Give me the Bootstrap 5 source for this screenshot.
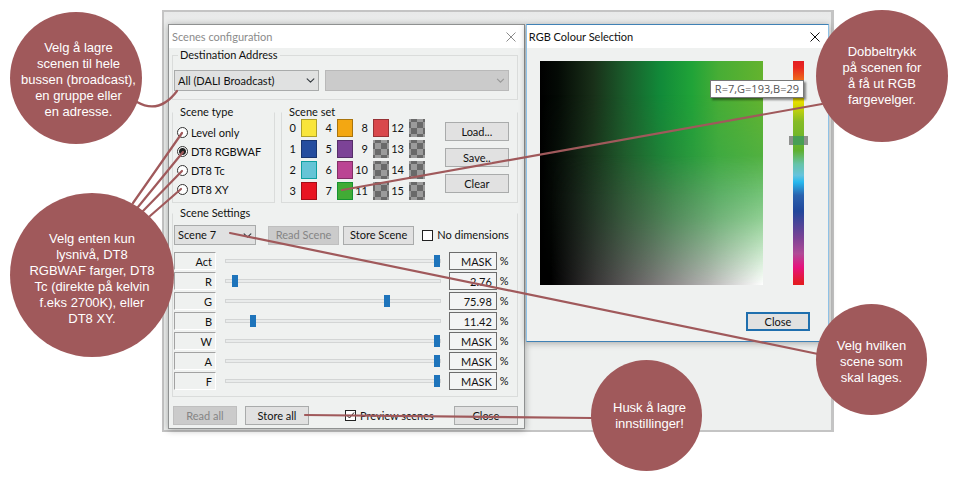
<!DOCTYPE html>
<html lang="no">
<head>
<meta charset="utf-8">
<meta name="viewport" content="width=device-width, initial-scale=1">
<title>Scenes configuration</title>
<link rel="stylesheet" href="https://cdn.jsdelivr.net/npm/bootstrap@5.3.0/dist/css/bootstrap.min.css">
<style>
:root { --rust: #a0595b; --face: #eff1f0; --line: #dadcdb; --btn: #e1e1e1; --blue: #1e74bb; }
body { background: #fff; font-family: Lato, "Open Sans", sans-serif; font-size: 11px; line-height: 14px; color: #111; }
.guide { padding: 10px 121px 45px 162px; }
.desk { border: 2px solid #c4c4c4; border-right-width: 3px; background: linear-gradient(#e8e9e9, #eef0ef 20px); padding: 12px 2px 1px 4px; gap: 1px; }
.win { border: 1px solid #8f9191; background: var(--face); box-shadow: 0 1px 7px rgba(0,0,0,.32); min-width: 0; }
.win-scenes { flex: 357 1 0; }
.win-rgb { flex: 303 1 0; border-color: #3f81b5; border-left-color: #8ec1e6; border-right-color: #8ec1e6; }
.win-title { height: 23px; background: #fff; padding: 0 8px 0 3px; }
.win-rgb .win-title { padding-left: 2px; }
.win-title h1, .win-title h2 { font-size: 11px; line-height: 14px; font-weight: 400; margin: 0; }
.win-scenes .win-title h1 { color: #8b8b8b; }
.win-x { border: 0; background: none; padding: 0; line-height: 0; }
.win-body { padding: 0 6px 3px 3px; }
fieldset.group { border: 1px solid var(--line); padding: 0 8px 0 1px; min-width: 0; }
fieldset.open-top { border-top-color: transparent; }
fieldset.group > legend { float: none; width: auto; margin: 0 0 0 4px; padding: 0 2px; font-size: 11px; line-height: 14px; }
.combo { font-size: 11px; line-height: 14px; height: 21px; padding: 0 16px 0 3px; border: 1px solid #a9abab; border-radius: 0; background-color: #e0e1e1; background-size: 9px 9px; background-position: right 3px center; color: #111; }
.combo:disabled { background-color: #cbcbcb; border-color: #b9b9b9; opacity: 1; background-image: url("data:image/svg+xml,%3Csvg xmlns='http://www.w3.org/2000/svg' viewBox='0 0 16 16'%3E%3Cpath d='m2 5 6 6 6-6' fill='none' stroke='%23999' stroke-width='2'/%3E%3C/svg%3E"); }
.push { font-size: 11px; line-height: 14px; height: 19px; padding: 0; border: 1px solid #a9abab; border-radius: 0; background: var(--btn); color: #111; white-space: nowrap; }
.push:disabled { background: #cbcbcb; border-color: #bfbfbf; color: #858585; opacity: 1; }
.w-push { width: 64px; }
.w-scene { width: 72px; }
.type-box { flex: 0 0 103px; }
.set-box { flex: 1 1 0; }
.radio-row { height: 19px; gap: 3px; }
.dot { appearance: none; width: 11px; height: 11px; margin: 0; border: 1px solid #333; border-radius: 50%; background: #fff; flex: none; }
.dot:checked { background: radial-gradient(circle, #222 0 3px, #fff 4px); }
.tick { appearance: none; width: 11px; height: 11px; margin: 0; border: 1px solid #222; background: #fff; flex: none; }
.tick:checked { background: #fff url("data:image/svg+xml,%3Csvg xmlns='http://www.w3.org/2000/svg' viewBox='0 0 9 9'%3E%3Cpath d='M1 4.500 3.500 7 8 1.500' fill='none' stroke='%23222'/%3E%3C/svg%3E"); }
.swatches { display: grid; grid-template-columns: 12px 16px 12px 16px 12px 16px 12px 16px; grid-auto-rows: 18px; gap: 3px 4px; align-items: center; text-align: right; }
.swatches label { white-space: nowrap; justify-self: end; padding-right: 1px; }
.chip { width: 16px; height: 18px; padding: 0; border: 1px solid rgba(0,0,0,.3); }
.chip-none { border: 0; background: conic-gradient(#696969 25%, #9b9b9b 0 50%, #696969 0 75%, #9b9b9b 0) 2px 3px / 12px 12px; }
.c0 { background: #f9e53a; } .c1 { background: #254d9f; } .c2 { background: #65c4d6; border-color: #0f9f9f; } .c3 { background: #e81422; }
.c4 { background: #f3a712; } .c5 { background: #7c4397; } .c6 { background: #bb4493; } .c7 { background: #41ab35; border-color: #169331; } .c8 { background: #d9484c; }
.chan { height: 20px; }
.chan-name { width: 42px; height: 18px; border: 1px solid #a2a2a2; border-right-color: #fff; border-bottom-color: #fff; text-align: right; padding-right: 3px; line-height: 17px; }
.chan-value { width: 48px; height: 18px; border: 1px solid #6d6d6d; background: #f3f4f4; text-align: right; padding: 0 4px; font-size: 11px; line-height: 14px; color: #111; }
.slide { appearance: none; background: none; height: 14px; margin: 0 8px 0 9px; min-width: 0; }
.slide::-webkit-slider-runnable-track { height: 4px; border: 1px solid #d3d5d5; background: #e9ebeb; }
.slide::-webkit-slider-thumb { appearance: none; width: 6px; height: 12px; margin-top: -5px; background: var(--blue); border: 0; border-radius: 0; }
.slide::-moz-range-track { height: 4px; border: 1px solid #d3d5d5; background: #e9ebeb; }
.slide::-moz-range-thumb { width: 6px; height: 12px; background: var(--blue); border: 0; border-radius: 0; }
.rgb-body { padding: 13px 18px 10px 13px; }
.field { flex: 1; max-width: 223px; height: 224px; position: relative; background: linear-gradient(90deg, #000 0, #040a05 8%, #193019 24%, #1a5c2b 38%, #118a39 54%, #20a338 68%, #47ad35 80%, #64b32e 100%); }
.field::before, .field::after { content: ""; position: absolute; inset: 0; }
.field::before { background: linear-gradient(90deg, #000 0, #112114 15%, #235c2d 38%, #2a8a3b 60%, #3aa848 80%, #46b04b 100%); mask-image: linear-gradient(transparent 15%, #000 60%); -webkit-mask-image: linear-gradient(transparent 15%, #000 60%); }
.field::after { background: linear-gradient(90deg, #000 5%, #3a3738 25%, #777374 50%, #b5b3b3 75%, #fff 100%); mask-image: linear-gradient(transparent 42%, rgba(0,0,0,.4) 70%, #000); -webkit-mask-image: linear-gradient(transparent 42%, rgba(0,0,0,.4) 70%, #000); }
.hue { width: 11px; height: 224px; margin-right: 6px; position: relative; background: linear-gradient(#e31e24 0, #e8281f 3%, #ef7d1a 10%, #f8e600 16%, #dfdc00 19%, #86bc25 27%, #5fb030 40%, #66c3a8 46%, #66c3dc 51%, #27b9ee 54%, #2a62ae 60%, #21479b 67%, #7c4295 79%, #b04a97 86%, #e6127e 92%, #e31b23 99%); }
.hue-grip { position: absolute; left: -4px; right: -4px; top: 75px; height: 9px; background: #8f918f; }
.hue-grip::after { content: ""; position: absolute; inset: 0 4px; background: #479e55; }
.tip { position: absolute; left: 170px; top: 19px; border: 1px solid #777; background: #fff; color: #555; padding: 1px 4px; white-space: nowrap; box-shadow: 2px 2px 2px rgba(0,0,0,.45); z-index: 1; font-family: "Open Sans", sans-serif; }
.rgb-close { border: 2px solid #1f6fae; margin-top: 27px; }
.leaders { position: absolute; left: 0; top: 0; width: 955px; height: 477px; pointer-events: none; z-index: 2; }
.note { position: absolute; z-index: 3; border-radius: 50%; background: var(--rust); color: #fff; font-family: "Liberation Sans", Arial, sans-serif; font-size: 13px; line-height: 16px; text-align: center; white-space: nowrap; }
.n-big { width: 132px; height: 132px; }
.n-huge { width: 164px; height: 164px; }
.n-mid { width: 111px; height: 111px; }
.n-address { left: 10px; top: 12px; padding: 4px 0 0 5px; }
.n-type { left: 10px; top: 193px; padding-top: 8px; }
.n-rgb { left: 816px; top: 10px; }
.n-scene { left: 816px; top: 304px; padding-top: 4px; }
.n-store { left: 591px; top: 360px; padding-left: 6px; }
.dest-a { flex: 142 1 0; margin-right: 2px; }
.dest-b { flex: 187 1 0; }
.boxes { gap: 6px; margin-top: 5px; }
.types { padding: 4px 0 3px 3px; }
.set-inner { padding: 0 0 2px 2px; }
.set-actions { gap: 7px; padding-top: 3px; }
.settings { margin-top: 3px; }
.scene-bar { padding: 5px 0 6px; gap: 4px; }
.scene-pick { flex: 0 0 82px; height: 20px; margin-right: 8px; }
.scene-bar .tick { margin-left: 4px; }
.last-chan { margin-bottom: 5px; }
.unit { width: 12px; margin: 0 -3px 0 3px; }
.foot { padding: 9px 0 0 1px; }
</style>
<script src="https://cdn.jsdelivr.net/npm/bootstrap@5.3.0/dist/js/bootstrap.bundle.min.js"></script>
</head>
<body>
<main class="guide position-relative">
  <div class="desk d-flex align-items-start">
    <section class="win win-scenes">
      <header class="win-title d-flex align-items-center justify-content-between">
        <h1>Scenes configuration</h1>
        <button class="win-x" type="button" aria-label="Close window"><svg width="10" height="10" viewBox="0 0 10 10"><path d="M.5.5l9 9M9.500.5l-9 9" stroke="#8a8a8a" fill="none"/></svg></button>
      </header>
      <form class="win-body">
        <fieldset class="group">
          <legend>Destination Address</legend>
          <div class="d-flex pt-2 pb-2 gap-1">
            <select class="form-select combo dest-a" aria-label="Destination"><option>All (DALI Broadcast)</option></select>
            <select class="form-select combo dest-b" aria-label="Destination number" disabled><option></option></select>
          </div>
        </fieldset>
        <div class="d-flex boxes">
          <fieldset class="group open-top type-box">
            <legend>Scene type</legend>
            <div class="types">
              <div class="radio-row d-flex align-items-center"><input class="dot" type="radio" name="type" id="t1"><label for="t1">Level only</label></div>
              <div class="radio-row d-flex align-items-center"><input class="dot" type="radio" name="type" id="t2" checked><label for="t2">DT8 RGBWAF</label></div>
              <div class="radio-row d-flex align-items-center"><input class="dot" type="radio" name="type" id="t3"><label for="t3">DT8 Tc</label></div>
              <div class="radio-row d-flex align-items-center"><input class="dot" type="radio" name="type" id="t4"><label for="t4">DT8 XY</label></div>
            </div>
          </fieldset>
          <fieldset class="group open-top set-box">
            <legend>Scene set</legend>
            <div class="d-flex justify-content-between set-inner">
              <div class="swatches">
                <label for="s0">0</label><button type="button" id="s0" class="chip c0"></button>
                <label for="s4">4</label><button type="button" id="s4" class="chip c4"></button>
                <label for="s8">8</label><button type="button" id="s8" class="chip c8"></button>
                <label for="s12">12</label><button type="button" id="s12" class="chip chip-none"></button>
                <label for="s1">1</label><button type="button" id="s1" class="chip c1"></button>
                <label for="s5">5</label><button type="button" id="s5" class="chip c5"></button>
                <label for="s9">9</label><button type="button" id="s9" class="chip chip-none"></button>
                <label for="s13">13</label><button type="button" id="s13" class="chip chip-none"></button>
                <label for="s2">2</label><button type="button" id="s2" class="chip c2"></button>
                <label for="s6">6</label><button type="button" id="s6" class="chip c6"></button>
                <label for="s10">10</label><button type="button" id="s10" class="chip chip-none"></button>
                <label for="s14">14</label><button type="button" id="s14" class="chip chip-none"></button>
                <label for="s3">3</label><button type="button" id="s3" class="chip c3"></button>
                <label for="s7">7</label><button type="button" id="s7" class="chip c7"></button>
                <label for="s11">11</label><button type="button" id="s11" class="chip chip-none"></button>
                <label for="s15">15</label><button type="button" id="s15" class="chip chip-none"></button>
              </div>
              <div class="d-flex flex-column set-actions">
                <button type="button" class="btn push w-push">Load...</button>
                <button type="button" class="btn push w-push">Save..</button>
                <button type="button" class="btn push w-push">Clear</button>
              </div>
            </div>
          </fieldset>
        </div>
        <fieldset class="group open-top settings">
          <legend>Scene Settings</legend>
          <div class="d-flex align-items-center scene-bar">
            <select class="form-select combo scene-pick" aria-label="Scene"><option>Scene 7</option></select>
            <button type="button" class="btn push w-scene" disabled>Read Scene</button>
            <button type="button" class="btn push w-scene">Store Scene</button>
            <input class="tick" type="checkbox" id="nodim"><label for="nodim" class="text-nowrap">No dimensions</label>
          </div>
          <div class="chan d-flex align-items-center"><label class="chan-name" for="r1">Act</label><input class="slide flex-fill" type="range" id="r1" min="0" max="100" step="0.01" value="100"><input class="chan-value" type="text" value="MASK" aria-label="Act value"><span class="unit">%</span></div>
          <div class="chan d-flex align-items-center"><label class="chan-name" for="r2">R</label><input class="slide flex-fill" type="range" id="r2" min="0" max="100" step="0.01" value="2.76"><input class="chan-value" type="text" value="2.76" aria-label="R value"><span class="unit">%</span></div>
          <div class="chan d-flex align-items-center"><label class="chan-name" for="r3">G</label><input class="slide flex-fill" type="range" id="r3" min="0" max="100" step="0.01" value="75.98"><input class="chan-value" type="text" value="75.98" aria-label="G value"><span class="unit">%</span></div>
          <div class="chan d-flex align-items-center"><label class="chan-name" for="r4">B</label><input class="slide flex-fill" type="range" id="r4" min="0" max="100" step="0.01" value="11.42"><input class="chan-value" type="text" value="11.42" aria-label="B value"><span class="unit">%</span></div>
          <div class="chan d-flex align-items-center"><label class="chan-name" for="r5">W</label><input class="slide flex-fill" type="range" id="r5" min="0" max="100" step="0.01" value="100"><input class="chan-value" type="text" value="MASK" aria-label="W value"><span class="unit">%</span></div>
          <div class="chan d-flex align-items-center"><label class="chan-name" for="r6">A</label><input class="slide flex-fill" type="range" id="r6" min="0" max="100" step="0.01" value="100"><input class="chan-value" type="text" value="MASK" aria-label="A value"><span class="unit">%</span></div>
          <div class="chan last-chan d-flex align-items-center"><label class="chan-name" for="r7">F</label><input class="slide flex-fill" type="range" id="r7" min="0" max="100" step="0.01" value="100"><input class="chan-value" type="text" value="MASK" aria-label="F value"><span class="unit">%</span></div>
        </fieldset>
        <div class="d-flex align-items-center justify-content-between foot">
          <div class="d-flex gap-2">
            <button type="button" class="btn push w-push" disabled>Read all</button>
            <button type="button" class="btn push w-push">Store all</button>
          </div>
          <div class="d-flex align-items-center gap-1 ps-3"><input class="tick" type="checkbox" id="prev" checked><label for="prev">Preview scenes</label></div>
          <button type="button" class="btn push w-push">Close</button>
        </div>
      </form>
    </section>
    <section class="win win-rgb">
      <header class="win-title d-flex align-items-center justify-content-between">
        <h2>RGB Colour Selection</h2>
        <button class="win-x" type="button" aria-label="Close window"><svg width="10" height="10" viewBox="0 0 10 10"><path d="M.5.5l9 9M9.500.5l-9 9" stroke="#111" fill="none"/></svg></button>
      </header>
      <div class="rgb-body">
        <div class="d-flex justify-content-between position-relative">
          <div class="field"></div>
          <div class="hue"><div class="hue-grip"></div></div>
          <div class="tip" role="tooltip">R=7,G=193,B=29</div>
        </div>
        <div class="d-flex justify-content-end"><button type="button" class="btn push w-push rgb-close">Close</button></div>
      </div>
    </section>
  </div>

  <svg class="leaders" viewBox="0 0 955 477" fill="none" stroke="#a0595b" stroke-width="2.200" stroke-linecap="round" aria-hidden="true">
    <path d="M137 102C151 110 165 107 177 91"/>
    <path d="M133 203L182 133M138 207L183 152M143 211L182 171M150 216L181 189"/>
    <path d="M342 190L822 104"/>
    <path d="M230 233L818 354"/>
    <path d="M305 415L592 418"/>
  </svg>
  <div class="note n-big n-address d-flex align-items-center justify-content-center">Velg å lagre<br>scenen til hele<br>bussen (broadcast),<br>en gruppe eller<br>en adresse.</div>
  <div class="note n-huge n-type d-flex align-items-center justify-content-center">Velg enten kun<br>lysnivå, DT8<br>RGBWAF farger, DT8<br>Tc (direkte på kelvin<br>f.eks 2700K), eller<br>DT8 XY.</div>
  <div class="note n-big n-rgb d-flex align-items-center justify-content-center">Dobbeltrykk<br>på scenen for<br>å få ut RGB<br>fargevelger.</div>
  <div class="note n-mid n-scene d-flex align-items-center justify-content-center">Velg hvilken<br>scene som<br>skal lages.</div>
  <div class="note n-mid n-store d-flex align-items-center justify-content-center">Husk å lagre<br>innstillinger!</div>
</main>
</body>
</html>
